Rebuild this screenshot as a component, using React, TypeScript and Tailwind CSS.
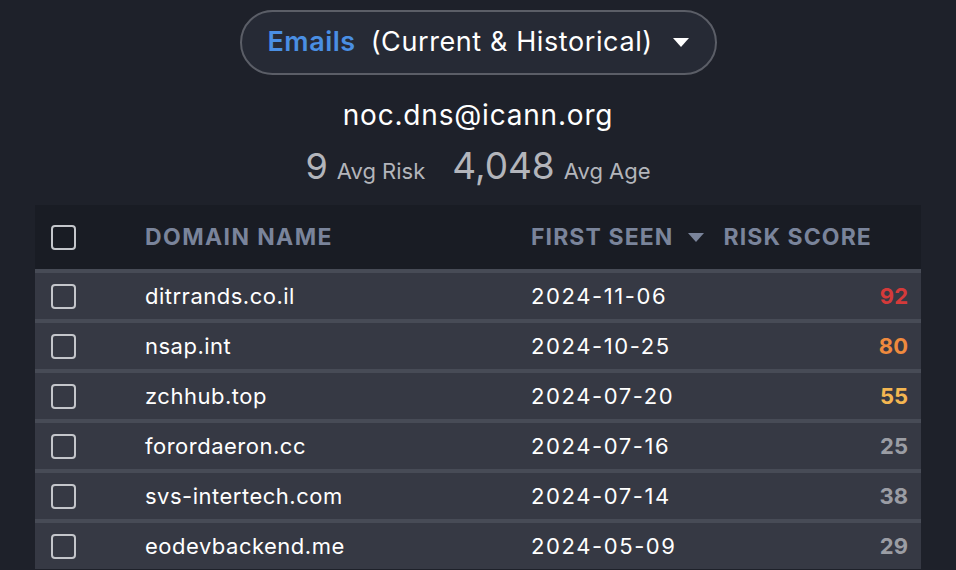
const ROWS = [
  { domain: 'ditrrands.co.il', seen: '2024-11-06', score: 92, color: 'text-[#d43a3a]' },
  { domain: 'nsap.int', seen: '2024-10-25', score: 80, color: 'text-[#ef8a3e]' },
  { domain: 'zchhub.top', seen: '2024-07-20', score: 55, color: 'text-[#f4b651]' },
  { domain: 'forordaeron.cc', seen: '2024-07-16', score: 25, color: 'text-[#9b9da4]' },
  { domain: 'svs-intertech.com', seen: '2024-07-14', score: 38, color: 'text-[#9b9da4]' },
  { domain: 'eodevbackend.me', seen: '2024-05-09', score: 29, color: 'text-[#9b9da4]' },
];

function Checkbox() {
  return <div className="w-[25px] h-[25px] rounded-[4px] border-2 border-[#c4c6cb]" />;
}

function Caret({ className }: { className: string }) {
  return (
    <svg viewBox="0 0 16 9" className={className}>
      <path d="M0 0h16L8 9z" fill="currentColor" />
    </svg>
  );
}

export default function App() {
  return (
    <div className="w-[956px] h-[570px] overflow-hidden bg-[#1e212a] font-['Inter',sans-serif] text-white">
      <div className="flex flex-col items-center pt-[10px]">
        {/* source selector */}
        <button className="w-[477px] h-[65px] rounded-full border-2 border-[#5b5e67] bg-[#262a35] flex items-center pl-[26px] pr-[26px]">
          <span className="text-[27px] font-semibold text-[#4a8fe3] tracking-[0.5px]">Emails</span>
          <span className="text-[27px] ml-[15px] text-white tracking-[0.6px]">(Current &amp; Historical)</span>
          <Caret className="w-[16px] h-[9px] ml-auto text-white" />
        </button>

        <div className="mt-[22px] text-[28px] leading-[36px] tracking-[0.8px]">noc.dns@icann.org</div>

        <div className="mt-[13px] flex items-baseline text-[#b3b5bb]">
          <span className="text-[36px] leading-[40px]">9</span>
          <span className="text-[22px] ml-[9px]">Avg Risk</span>
          <span className="text-[37px] leading-[40px] ml-[27px]">4,048</span>
          <span className="text-[22px] ml-[9px]">Avg Age</span>
        </div>
      </div>

      <div className="ml-[35px] w-[886px] mt-[17px]">
        {/* header */}
        <div className="h-[64px] bg-[#191c24] grid grid-cols-[110px_386px_1fr] items-center">
          <div className="pl-[16px]"><Checkbox /></div>
          <div className="text-[23px] font-bold text-[#7a849b] tracking-[1.4px]">DOMAIN NAME</div>
          <div className="flex items-center text-[23px] font-bold text-[#7a849b] tracking-[1.1px]">
            <span>FIRST SEEN</span>
            <Caret className="w-[16px] h-[9px] ml-[15px] text-[#7a849b]" />
            <span className="ml-[19px]">RISK SCORE</span>
          </div>
        </div>

        {ROWS.map((r) => (
          <div key={r.domain} className="h-[50px] border-t-4 border-[#474b56] bg-[#363944] grid grid-cols-[110px_386px_1fr] items-center">
            <div className="pl-[16px]"><Checkbox /></div>
            <div className="text-[22px] tracking-[0.5px]">{r.domain}</div>
            <div className="flex items-center justify-between pr-[13px]">
              <span className="text-[22px] tracking-[1.6px]">{r.seen}</span>
              <span className={`text-[22px] font-bold ${r.color}`}>{r.score}</span>
            </div>
          </div>
        ))}
      </div>
    </div>
  );
}
